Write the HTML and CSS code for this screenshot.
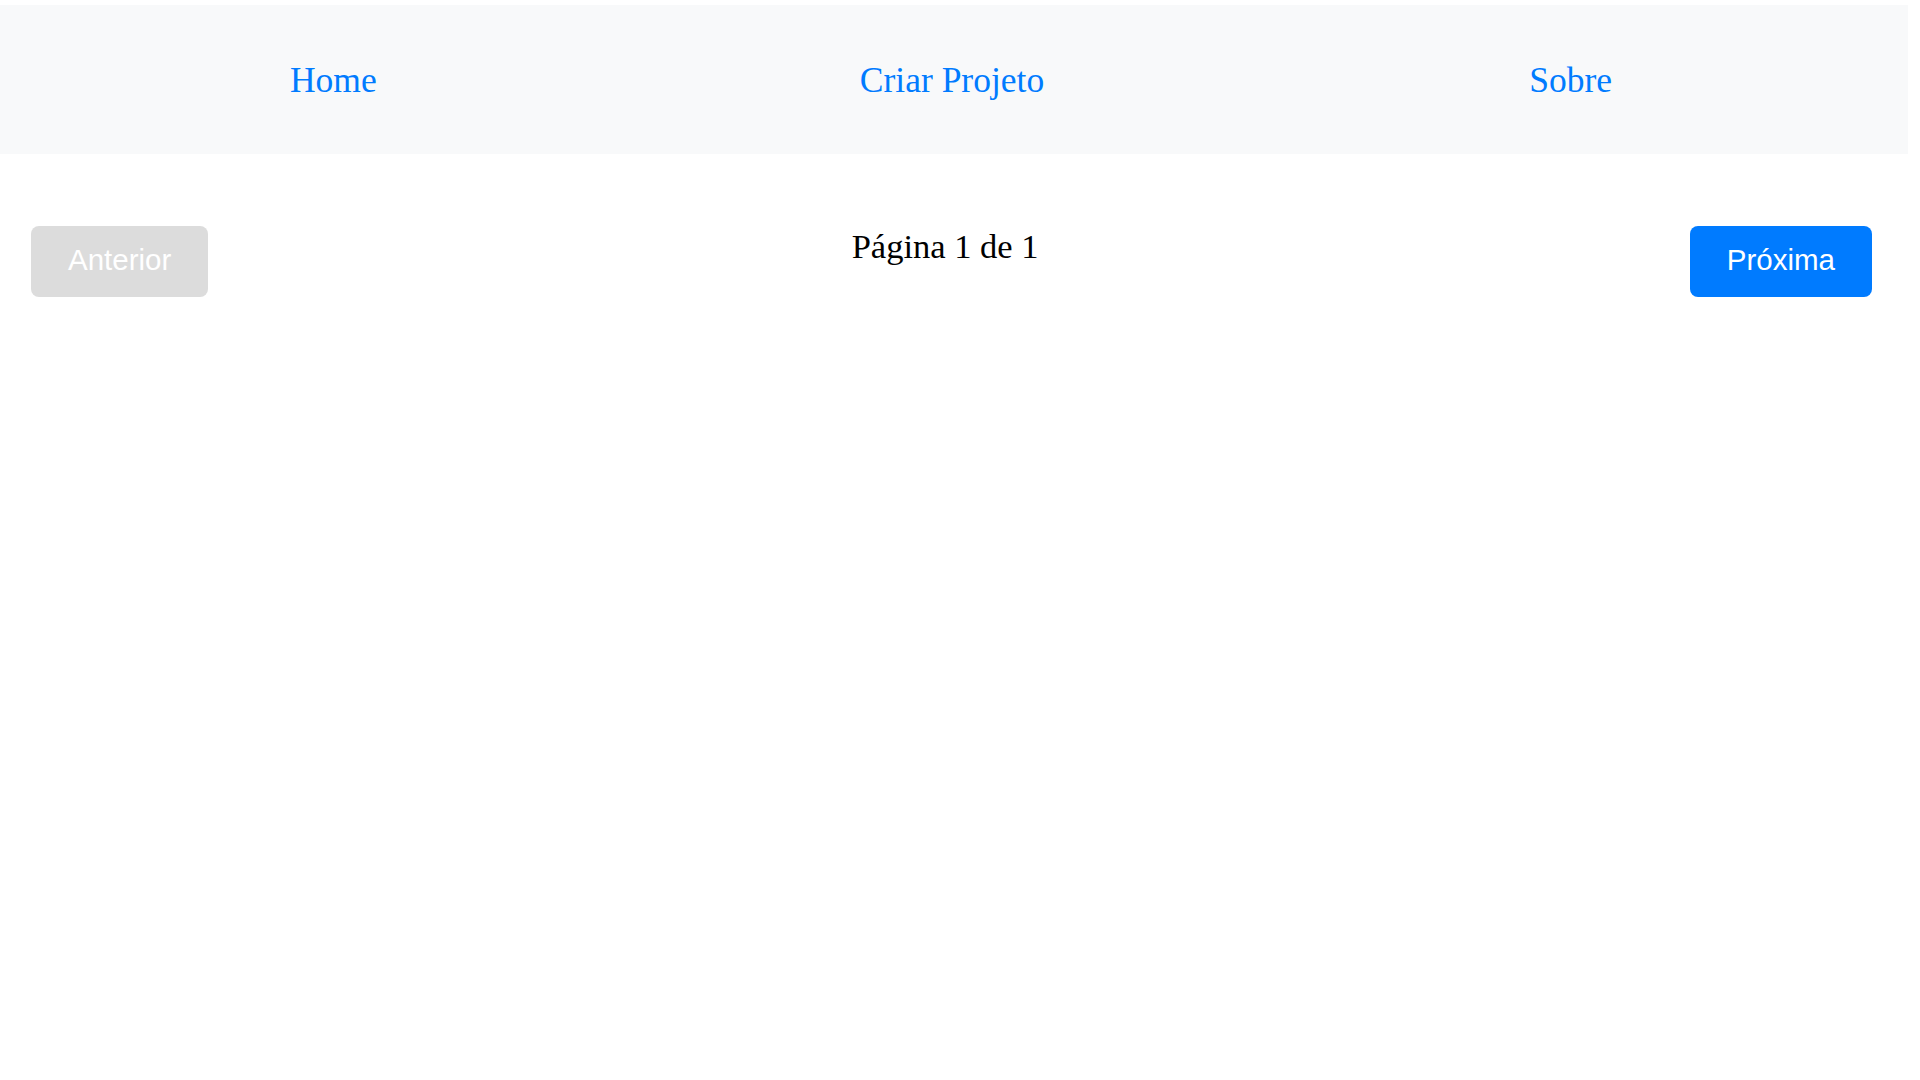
FILE: index.html
```html
<!DOCTYPE html>
<html lang="pt">
<head>
<meta charset="utf-8">
<title>Projetos</title>
<link rel="stylesheet" href="styles.css">
</head>
<body>
<nav class="navbar">
  <a class="nav-link" href="#">Home</a>
  <a class="nav-link" href="#">Criar Projeto</a>
  <a class="nav-link" href="#">Sobre</a>
</nav>
<div class="pagination">
  <button class="btn btn-disabled" disabled>Anterior</button>
  <span class="page-info">Página 1 de 1</span>
  <button class="btn btn-primary">Próxima</button>
</div>
</body>
</html>
```
FILE: styles.css
```css
html, body {
  margin: 0;
  padding: 0;
  background: #ffffff;
}
body {
  font-family: "Liberation Serif", "Times New Roman", serif;
  color: #000;
}
.navbar {
  display: flex;
  align-items: center;
  margin: 5px 12px 0 0;
  height: 149px;
  padding: 0 28px 0 24px;
  background: #f8f9fa;
}
.nav-link {
  flex: 1;
  text-align: center;
  font-size: 35.5px;
  color: #007bff;
  text-decoration: none;
  margin-top: 0;
}
.pagination {
  display: flex;
  justify-content: space-between;
  align-items: flex-start;
  padding: 72px 48px 0 31px;
}
.page-info {
  font-size: 34.5px;
  margin-top: 1px;
  margin-right: 8px;
}
.btn {
  font-family: "Liberation Sans", Arial, sans-serif;
  font-size: 29.5px;
  line-height: 34px;
  padding: 17px 37px 20px;
  border: none;
  border-radius: 8px;
  color: #fff;
}
.btn-disabled {
  background: #dcdcdc;
}
.btn-primary {
  background: #007bff;
}
```
